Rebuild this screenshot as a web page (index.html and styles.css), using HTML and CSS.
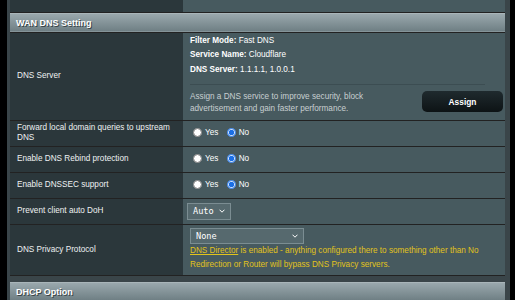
FILE: index.html
```html
<!DOCTYPE html>
<html lang="en">
<head>
    <meta charset="UTF-8">
    <meta name="viewport" content="width=device-width, initial-scale=1.0">
    <title>WAN - DNS Setting</title>
    <link rel="stylesheet" href="styles.css">
</head>
<body>
    <div class="content">
        <!-- tail of the table above -->
        <table class="form-table prev">
            <tr><th></th><td></td></tr>
        </table>

        <table class="form-table">
            <thead>
                <tr><td colspan="2">WAN DNS Setting</td></tr>
            </thead>
            <tbody>
                <tr class="dns-row">
                    <th>DNS Server</th>
                    <td>
                        <div class="dns-info">
                            <div><b>Filter Mode:</b> Fast DNS</div>
                            <div><b>Service Name:</b> Cloudflare</div>
                            <div><b>DNS Server:</b> 1.1.1.1, 1.0.0.1</div>
                        </div>
                        <div class="divider"></div>
                        <div class="assign-row">
                            <p class="hint">Assign a DNS service to improve security, block advertisement and gain faster performance.</p>
                            <button class="button-gen">Assign</button>
                        </div>
                    </td>
                </tr>
                <tr class="radio-row">
                    <th>Forward local domain queries to upstream DNS</th>
                    <td>
                        <label class="radio"><input type="radio" name="fwd"> Yes</label>
                        <label class="radio"><input type="radio" name="fwd" checked> No</label>
                    </td>
                </tr>
                <tr class="radio-row">
                    <th>Enable DNS Rebind protection</th>
                    <td>
                        <label class="radio"><input type="radio" name="rebind"> Yes</label>
                        <label class="radio"><input type="radio" name="rebind" checked> No</label>
                    </td>
                </tr>
                <tr class="radio-row">
                    <th>Enable DNSSEC support</th>
                    <td>
                        <label class="radio"><input type="radio" name="dnssec"> Yes</label>
                        <label class="radio"><input type="radio" name="dnssec" checked> No</label>
                    </td>
                </tr>
                <tr class="radio-row">
                    <th>Prevent client auto DoH</th>
                    <td>
                        <div class="input-option small">
                            <span>Auto</span>
                            <svg width="6" height="4" viewBox="0 0 6 4"><polyline points="0.5,0.7 3,3.2 5.5,0.7" fill="none" stroke="#fff" stroke-width="1"/></svg>
                        </div>
                    </td>
                </tr>
                <tr class="privacy-row">
                    <th>DNS Privacy Protocol</th>
                    <td>
                        <div class="input-option wide">
                            <span>None</span>
                            <svg width="6" height="4" viewBox="0 0 6 4"><polyline points="0.5,0.7 3,3.2 5.5,0.7" fill="none" stroke="#fff" stroke-width="1"/></svg>
                        </div>
                        <p class="warn"><a href="#">DNS Director</a> is enabled - anything configured there to something other than No Redirection or Router will bypass DNS Privacy servers.</p>
                    </td>
                </tr>
            </tbody>
        </table>

        <table class="form-table next">
            <thead>
                <tr><td colspan="2">DHCP Option</td></tr>
            </thead>
        </table>
    </div>
</body>
</html>
```

FILE: styles.css
```css
* {
    box-sizing: border-box;
    margin: 0;
    padding: 0;
}

body {
    background: #000;
    font-family: 'Liberation Sans', Arial, sans-serif;
    font-size: 8.2px;
    color: #fff;
    overflow: hidden;
}

.content {
    margin-left: 7px;
    width: 503px;
    min-height: 300px;
    background: #3a4549;
    padding: 0 5px 0 3px;
}

.form-table {
    width: 100%;
    border-collapse: collapse;
}

.form-table th {
    width: 173px;
    background: #2b373b;
    font-weight: normal;
    text-align: left;
    line-height: 10px;
    color: #eef1f2;
    padding: 0 8px 0 7px;
    border-top: 1px solid #222;
    border-bottom: 1px solid #222;
}

.form-table td {
    background: #475a5f;
    padding: 0 0 0 7px;
    border-top: 1px solid #222;
    border-bottom: 1px solid #222;
}

.form-table thead td {
    height: 19px;
    padding-left: 6px;
    background: linear-gradient(#9ba9ae, #6e7e83);
    border-top: 1px solid #a9b5b9;
    border-bottom: 1px solid #222;
    font-size: 9px;
    font-weight: bold;
    text-shadow: 1px 1px 0 #3a4549;
}

.prev th,
.prev td {
    height: 12px;
    border-top: none;
}

.next {
    margin-top: 6px;
}

/* DNS server row */
.dns-row th,
.dns-row td {
    height: 88px;
}

.dns-row td {
    vertical-align: top;
    padding-top: 1px;
}

.dns-info {
    line-height: 14.5px;
}

.divider {
    width: 295px;
    height: 1px;
    background: #3c4d52;
    margin-top: 7px;
}

.assign-row {
    display: flex;
    align-items: flex-start;
    margin-top: 6px;
}

.hint {
    width: 212px;
    line-height: 12px;
    color: #c8cfd1;
}

.button-gen {
    margin: 0 2px 0 auto;
    width: 81px;
    height: 21px;
    border: none;
    border-radius: 5px;
    background: linear-gradient(#1f2a2e, #0d1315);
    color: #fff;
    font-family: 'Liberation Sans', Arial, sans-serif;
    font-size: 8.4px;
    font-weight: bold;
    cursor: pointer;
}

/* radio rows */
.radio-row th,
.radio-row td {
    height: 26px;
}

.radio {
    display: inline-flex;
    align-items: center;
    gap: 3px;
    margin-right: 3px;
}

.radio input {
    width: 9px;
    height: 9px;
    margin: 0 0 0 3px;
    accent-color: #1a6fe6;
}

/* select look-alike */
.input-option {
    display: flex;
    align-items: center;
    justify-content: space-between;
    background: #56696e;
    border: 1px solid #7b8d92;
    font-family: 'DejaVu Sans Mono', 'Liberation Mono', monospace;
    font-size: 8.6px;
    padding: 0 5px 0 5px;
}

.input-option.small {
    width: 44px;
    height: 17px;
    margin-left: -3px;
}

.input-option.wide {
    width: 114px;
    height: 16px;
    margin-top: 3px;
}

.privacy-row th,
.privacy-row td {
    height: 51px;
}

.privacy-row td {
    vertical-align: top;
}

.warn {
    line-height: 14px;
    color: #e2c31c;
}

.warn a {
    color: #e2c31c;
}
```
